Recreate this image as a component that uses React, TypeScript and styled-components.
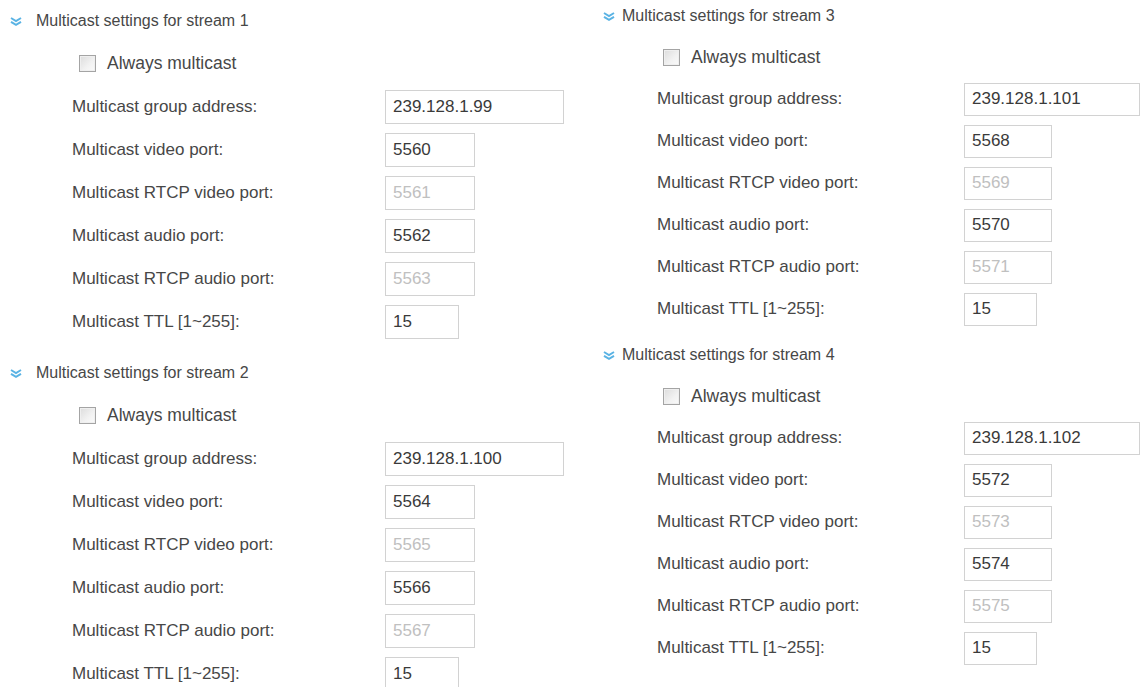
import React from 'react';
import styled, { createGlobalStyle } from 'styled-components';

const GlobalStyle = createGlobalStyle`
  html, body {
    margin: 0;
    padding: 0;
    background: #ffffff;
  }
  body {
    font-family: "Liberation Sans", Arial, sans-serif;
    color: #474747;
  }
`;

interface Layout {
  headerHeight: number;
  headerLift: number;
  iconLeft: number;
  iconGap: number;
  labelLeft: number;
  labelWidth: number;
  checkIndent: number;
  pitch: number;
  boxHeight: number;
  sectionGap: number;
  widths: { wide: number; port: number; ttl: number };
}

const leftLayout: Layout = {
  headerHeight: 42,
  headerLift: 0,
  iconLeft: 10,
  iconGap: 14,
  labelLeft: 72,
  labelWidth: 313,
  checkIndent: 7,
  pitch: 43,
  boxHeight: 34,
  sectionGap: 3,
  widths: { wide: 179, port: 90, ttl: 74 },
};

const rightLayout: Layout = {
  headerHeight: 36,
  headerLift: 4,
  iconLeft: 7,
  iconGap: 7,
  labelLeft: 61,
  labelWidth: 307,
  checkIndent: 6,
  pitch: 42,
  boxHeight: 33,
  sectionGap: 9,
  widths: { wide: 176, port: 88, ttl: 73 },
};

const Page = styled.div`
  display: grid;
  grid-template-columns: 596px 1fr;
  width: 1146px;
  height: 687px;
  overflow: hidden;
`;

const Column = styled.div`
  display: flex;
  flex-direction: column;
`;

const Section = styled.section<{ $gap: number }>`
  display: flex;
  flex-direction: column;
  & + & {
    margin-top: ${p => p.$gap}px;
  }
`;

const SectionHeader = styled.div<{ $height: number; $lift: number; $left: number; $gap: number }>`
  display: flex;
  align-items: center;
  gap: ${p => p.$gap}px;
  height: ${p => p.$height}px;
  padding-left: ${p => p.$left}px;
  padding-bottom: ${p => p.$lift}px;
  box-sizing: border-box;
  font-size: 16px;
  color: #474747;
  cursor: pointer;
`;

const CheckRow = styled.label<{ $height: number; $left: number }>`
  display: flex;
  align-items: center;
  gap: 11px;
  height: ${p => p.$height}px;
  padding-left: ${p => p.$left}px;
  font-size: 17.5px;
  color: #474747;
`;

const CheckBox = styled.span`
  width: 17px;
  height: 17px;
  box-sizing: border-box;
  border: 1px solid #a4a4a4;
  background: linear-gradient(135deg, #dcdcdc 0%, #f2f2f2 60%, #fafafa 100%);
  box-shadow: inset 0 0 0 1px #efefef;
`;

const FieldRow = styled.div<{ $height: number; $left: number; $labelWidth: number }>`
  display: grid;
  grid-template-columns: ${p => p.$labelWidth}px auto;
  align-items: center;
  height: ${p => p.$height}px;
  padding-left: ${p => p.$left}px;
`;

const FieldLabel = styled.span`
  font-size: 17px;
  color: #474747;
`;

const FieldBox = styled.input<{ $width: number; $height: number }>`
  width: ${p => p.$width}px;
  height: ${p => p.$height}px;
  box-sizing: border-box;
  margin: 0;
  padding: 0 7px;
  border: 1px solid #d2d2d2;
  background: #ffffff;
  font-family: "Liberation Sans", Arial, sans-serif;
  font-size: 17px;
  color: #3a3a3a;
  outline: none;

  &:disabled {
    color: #c0c0c0;
    background: #ffffff;
  }
`;

const ExpandIcon = () => (
  <svg width="12" height="9" viewBox="0 0 12 9" fill="none">
    <path d="M1 1 L6 4 L11 1" stroke="#5ab3e4" strokeWidth="2" />
    <path d="M1 4.8 L6 7.8 L11 4.8" stroke="#5ab3e4" strokeWidth="2" />
  </svg>
);

interface StreamConfig {
  id: number;
  group: string;
  basePort: number;
  ttl: number;
}

const StreamSection: React.FC<{ stream: StreamConfig; layout: Layout }> = ({ stream, layout }) => {
  const p = stream.basePort;
  const fields: { label: string; value: string; size: 'wide' | 'port' | 'ttl'; disabled?: boolean }[] = [
    { label: 'Multicast group address:', value: stream.group, size: 'wide' },
    { label: 'Multicast video port:', value: String(p), size: 'port' },
    { label: 'Multicast RTCP video port:', value: String(p + 1), size: 'port', disabled: true },
    { label: 'Multicast audio port:', value: String(p + 2), size: 'port' },
    { label: 'Multicast RTCP audio port:', value: String(p + 3), size: 'port', disabled: true },
    { label: 'Multicast TTL [1~255]:', value: String(stream.ttl), size: 'ttl' },
  ];

  return (
    <Section $gap={layout.sectionGap}>
      <SectionHeader
        $height={layout.headerHeight}
        $lift={layout.headerLift}
        $left={layout.iconLeft}
        $gap={layout.iconGap}
      >
        <ExpandIcon />
        <span>Multicast settings for stream {stream.id}</span>
      </SectionHeader>
      <CheckRow $height={layout.pitch} $left={layout.labelLeft + layout.checkIndent}>
        <CheckBox />
        <span>Always multicast</span>
      </CheckRow>
      {fields.map(f => (
        <FieldRow key={f.label} $height={layout.pitch} $left={layout.labelLeft} $labelWidth={layout.labelWidth}>
          <FieldLabel>{f.label}</FieldLabel>
          <FieldBox
            readOnly
            disabled={f.disabled}
            value={f.value}
            $width={layout.widths[f.size]}
            $height={layout.boxHeight}
          />
        </FieldRow>
      ))}
    </Section>
  );
};

const streams: StreamConfig[] = [
  { id: 1, group: '239.128.1.99', basePort: 5560, ttl: 15 },
  { id: 2, group: '239.128.1.100', basePort: 5564, ttl: 15 },
  { id: 3, group: '239.128.1.101', basePort: 5568, ttl: 15 },
  { id: 4, group: '239.128.1.102', basePort: 5572, ttl: 15 },
];

export default function App() {
  return (
    <>
      <GlobalStyle />
      <Page>
        <Column>
          <StreamSection stream={streams[0]} layout={leftLayout} />
          <StreamSection stream={streams[1]} layout={leftLayout} />
        </Column>
        <Column>
          <StreamSection stream={streams[2]} layout={rightLayout} />
          <StreamSection stream={streams[3]} layout={rightLayout} />
        </Column>
      </Page>
    </>
  );
}
